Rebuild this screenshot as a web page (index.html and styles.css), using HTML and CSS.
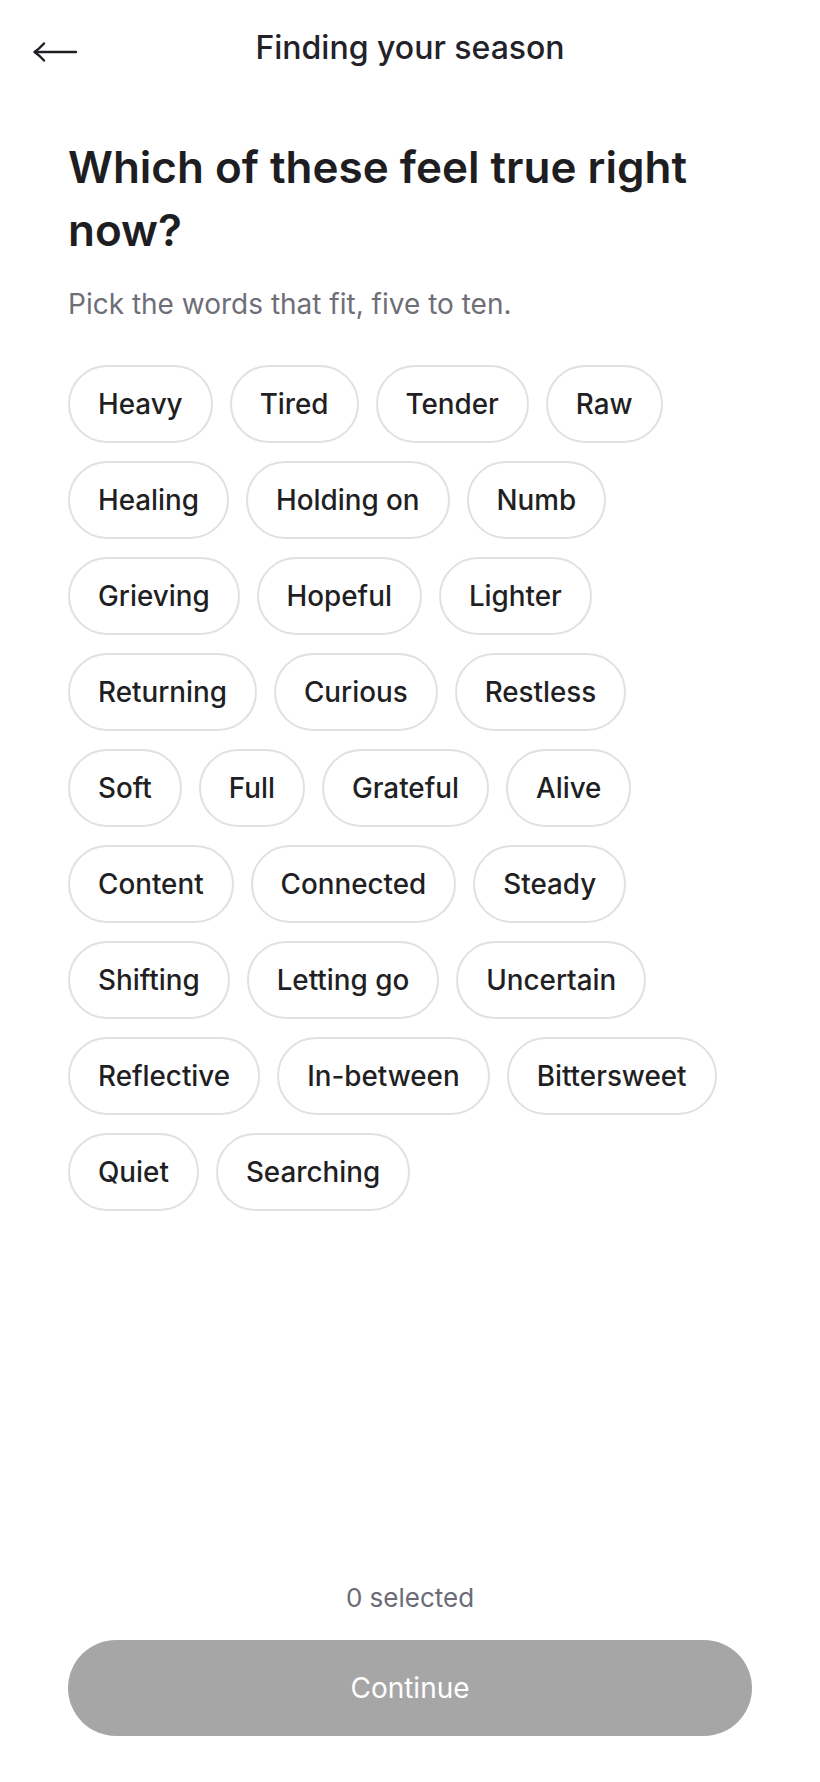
FILE: index.html
```html
<!DOCTYPE html>
<html lang="en">
<head>
<meta charset="utf-8">
<title>Finding your season</title>
<link rel="stylesheet" href="styles.css">
</head>
<body>
<div class="screen">
  <header class="topbar">
    <button class="back" aria-label="Back">
      <svg width="46" height="22" viewBox="0 0 46 22" fill="none" stroke="#1f1f24" stroke-width="2.4" stroke-linecap="round" stroke-linejoin="round">
        <path d="M3 11 H44"/>
        <path d="M12 2.5 Q7 8 2.5 11 Q7 14 12 19.5"/>
      </svg>
    </button>
    <div class="title">Finding your season</div>
  </header>

  <main class="content">
    <h1 class="heading">Which of these feel true right now?</h1>
    <p class="sub">Pick the words that fit, five to ten.</p>
    <div class="chips">
      <span class="chip">Heavy</span>
      <span class="chip">Tired</span>
      <span class="chip">Tender</span>
      <span class="chip">Raw</span>
      <span class="chip">Healing</span>
      <span class="chip">Holding on</span>
      <span class="chip">Numb</span>
      <span class="chip">Grieving</span>
      <span class="chip">Hopeful</span>
      <span class="chip">Lighter</span>
      <span class="chip">Returning</span>
      <span class="chip">Curious</span>
      <span class="chip">Restless</span>
      <span class="chip">Soft</span>
      <span class="chip">Full</span>
      <span class="chip">Grateful</span>
      <span class="chip">Alive</span>
      <span class="chip">Content</span>
      <span class="chip">Connected</span>
      <span class="chip">Steady</span>
      <span class="chip">Shifting</span>
      <span class="chip">Letting go</span>
      <span class="chip">Uncertain</span>
      <span class="chip">Reflective</span>
      <span class="chip">In-between</span>
      <span class="chip">Bittersweet</span>
      <span class="chip">Quiet</span>
      <span class="chip">Searching</span>
    </div>
  </main>

  <footer class="footer">
    <div class="count">0 selected</div>
    <button class="continue" disabled>Continue</button>
  </footer>
</div>
</body>
</html>
```

FILE: styles.css
```css
* { box-sizing: border-box; }

html, body {
  margin: 0;
  padding: 0;
  background: #ffffff;
}

body {
  font-family: Inter, "Noto Sans", "Liberation Sans", sans-serif;
  color: #1f1f24;
}

.screen {
  min-height: 100vh;
  display: flex;
  flex-direction: column;
}

.topbar {
  position: relative;
  height: 96px;
  display: flex;
  align-items: center;
  justify-content: center;
}

.back {
  position: absolute;
  left: 32px;
  top: 41px;
  padding: 0;
  margin: 0;
  border: 0;
  background: none;
  display: flex;
  line-height: 0;
}

.title {
  font-size: 32px;
  line-height: 40px;
  font-weight: 500;
  color: #222228;
}

.content {
  padding: 0 68px;
}

.heading {
  margin: 40px 0 0;
  font-size: 44px;
  line-height: 63px;
  font-weight: 600;
  color: #1e1e22;
}

.sub {
  margin: 24px 0 0;
  font-size: 28px;
  line-height: 36px;
  color: #6e6e78;
}

.chips {
  margin-top: 43px;
  display: flex;
  flex-wrap: wrap;
  column-gap: 17px;
  row-gap: 18px;
}

.chip {
  display: inline-block;
  border: 2px solid #e0e0e5;
  border-radius: 999px;
  padding: 19px 28px;
  font-size: 27.8px;
  line-height: 36px;
  font-weight: 500;
  color: #1f1f24;
  white-space: nowrap;
}

.footer {
  margin-top: auto;
  padding: 0 68px 46px;
  display: flex;
  flex-direction: column;
  align-items: center;
}

.count {
  font-size: 26px;
  line-height: 36px;
  color: #6b6b75;
  margin-bottom: 24px;
}

.continue {
  width: 100%;
  height: 96px;
  border: 0;
  border-radius: 999px;
  background: #a6a6a6;
  color: #ffffff;
  font-family: inherit;
  font-size: 28px;
  font-weight: 400;
}
```
